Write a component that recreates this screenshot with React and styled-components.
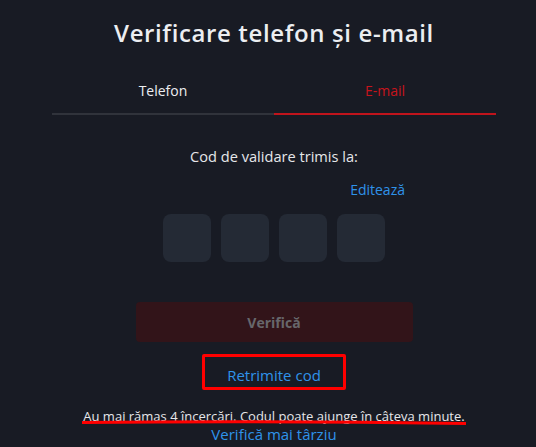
import React from "react";
import styled, { createGlobalStyle } from "styled-components";

const Global = createGlobalStyle`
  html, body { margin: 0; padding: 0; background: #181b24; }
  body { font-family: "Open Sans", "Noto Sans", sans-serif; color: #e6e7ea; }
  * { box-sizing: border-box; }
`;

const Page = styled.div`
  position: relative;
  width: 536px;
  height: 447px;
  overflow: hidden;
  padding-left: 12px;
  display: flex;
  flex-direction: column;
  align-items: center;
`;

const Title = styled.h1`
  margin: 17px 0 0;
  font-size: 24px;
  line-height: 32px;
  font-weight: 600;
  letter-spacing: 0.62px;
  color: #eceef1;
  white-space: nowrap;
`;

const Tabs = styled.div`
  margin-top: 27px;
  width: 444px;
  display: grid;
  grid-template-columns: 1fr 1fr;
`;

const Tab = styled.div`
  height: 39px;
  padding-bottom: 8px;
  display: flex;
  align-items: center;
  justify-content: center;
  font-size: 14px;
  color: ${(p) => (p.$active ? "#c8141c" : "#eceef1")};
  border-bottom: 2px solid ${(p) => (p.$active ? "#c0141c" : "#30333b")};
`;

const Sent = styled.div`
  margin-top: 31px;
  font-size: 14.6px;
  line-height: 20px;
  color: #e6e7ea;
`;

const EditRow = styled.div`
  margin-top: 14px;
  width: 262px;
  display: flex;
  justify-content: flex-end;
`;

const Link = styled.a`
  font-size: ${(p) => p.$size || 14}px;
  line-height: 20px;
  color: #2f93ea;
  text-decoration: none;
  cursor: pointer;
`;

const Boxes = styled.div`
  margin-top: 14px;
  display: flex;
  gap: 10px;
`;

const CodeBox = styled.div`
  width: 48px;
  height: 48px;
  border-radius: 8px;
  background: #242a35;
`;

const VerifyButton = styled.button`
  margin-top: 40px;
  width: 277px;
  height: 40px;
  border: none;
  border-radius: 4px;
  background: #321419;
  color: #67676b;
  font-family: inherit;
  font-size: 14px;
  font-weight: 700;
`;

const ResendWrap = styled.div`
  position: relative;
  margin-top: 12px;
  width: 144px;
  height: 36px;
  display: flex;
  align-items: flex-end;
  justify-content: center;
  padding-bottom: 5px;
`;

const RedBox = styled.div`
  position: absolute;
  inset: 0;
  border: 3px solid #ff0000;
  border-radius: 2px;
  pointer-events: none;
`;

const Info = styled.div`
  position: relative;
  margin-top: 18px;
  font-size: 13px;
  line-height: 16px;
  color: #e6e7ea;
  white-space: nowrap;
`;

const Underline = styled.svg`
  position: absolute;
  left: -2px;
  top: 12px;
  pointer-events: none;
  overflow: visible;
`;

export default function App() {
  return (
    <>
      <Global />
      <Page>
        <Title>Verificare telefon și e-mail</Title>
        <Tabs>
          <Tab>Telefon</Tab>
          <Tab $active>E-mail</Tab>
        </Tabs>
        <Sent>Cod de validare trimis la:</Sent>
        <EditRow>
          <Link>Editează</Link>
        </EditRow>
        <Boxes>
          <CodeBox />
          <CodeBox />
          <CodeBox />
          <CodeBox />
        </Boxes>
        <VerifyButton>Verifică</VerifyButton>
        <ResendWrap>
          <Link $size={15}>Retrimite cod</Link>
          <RedBox />
        </ResendWrap>
        <Info>
          Au mai rămas 4 încercări. Codul poate ajunge în câteva minute.
          <Underline width="386" height="6">
            <path d="M1 2.5 Q 190 0.5 385 3.5" stroke="#ff0000" strokeWidth="3" fill="none" />
          </Underline>
        </Info>
        <Link $size={15}>Verifică mai târziu</Link>
      </Page>
    </>
  );
}
